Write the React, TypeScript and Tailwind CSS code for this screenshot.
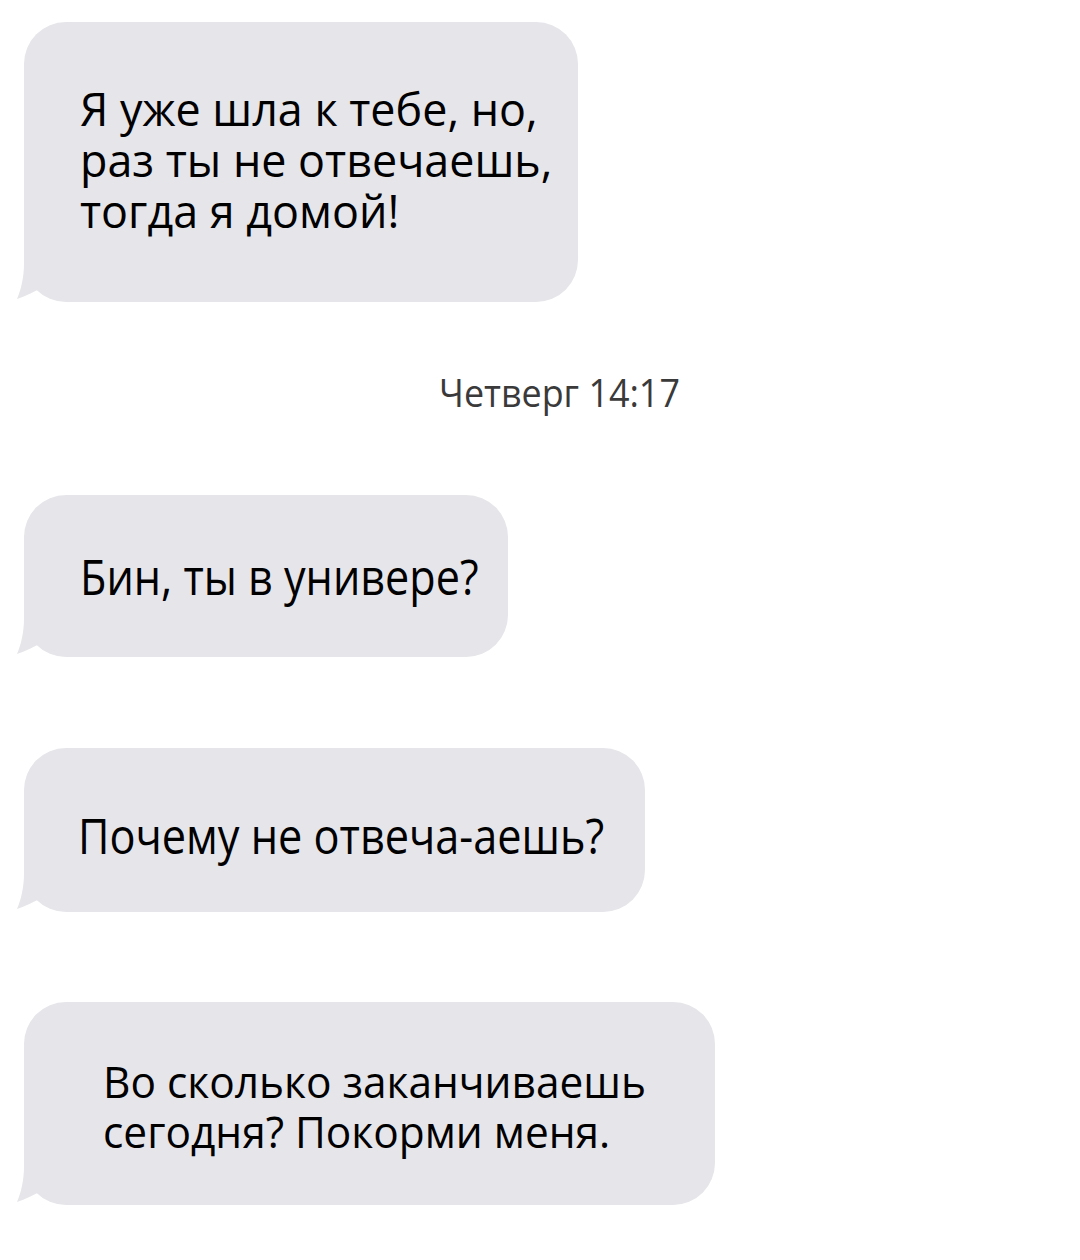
const bubbleFont = { fontFamily: '"Open Sans", "Noto Sans", sans-serif' };

function Tail() {
  return (
    <svg
      className="absolute left-[-8px] bottom-0"
      width="60"
      height="50"
      viewBox="0 0 60 50"
      aria-hidden
    >
      <path
        d="M8 0 L8 12 C8 25 5 38 1 47 C10 44 19 39 27 35 C37 44 47 49 60 50 L60 0 Z"
        fill="#e5e5ea"
      />
    </svg>
  );
}

interface BubbleProps {
  lines: string[];
  className: string;
  textClass: string;
}

function Bubble({ lines, className, textClass }: BubbleProps) {
  return (
    <div className={`relative bg-[#e5e5ea] rounded-[42px] flex items-center ${className}`}>
      <Tail />
      <p className={`relative text-black origin-left ${textClass}`} style={bubbleFont}>
        {lines.map((l) => (
          <span key={l} className="block whitespace-nowrap">
            {l}
          </span>
        ))}
      </p>
    </div>
  );
}

export default function App() {
  return (
    <div className="w-[1080px] h-[1260px] bg-white flex flex-col items-start pl-[24px] pt-[22px]">
      <Bubble
        className="w-[554px] h-[280px] pl-[56px]"
        textClass="text-[46px] leading-[51px] scale-x-[0.975] mb-[6px]"
        lines={['Я уже шла к тебе, но,', 'раз ты не отвечаешь,', 'тогда я домой!']}
      />

      <div
        className="mt-[70px] ml-[415px] text-[39px] leading-none text-[#3a3a3a] origin-left scale-x-[0.92]"
        style={bubbleFont}
      >
        Четверг 14:17
      </div>

      <Bubble
        className="mt-[84px] w-[484px] h-[162px] pl-[56px]"
        textClass="text-[49px] leading-[56px] scale-x-[0.88]"
        lines={['Бин, ты в универе?']}
      />

      <Bubble
        className="mt-[91px] w-[621px] h-[164px] pl-[54px]"
        textClass="text-[50px] leading-[56px] scale-x-[0.865] mt-[10px]"
        lines={['Почему не отвеча-аешь?']}
      />

      <Bubble
        className="mt-[90px] w-[691px] h-[203px] pl-[79px]"
        textClass="text-[44px] leading-[50px] scale-x-[0.964] mt-[4px]"
        lines={['Во сколько заканчиваешь', 'сегодня? Покорми меня.']}
      />
    </div>
  );
}
